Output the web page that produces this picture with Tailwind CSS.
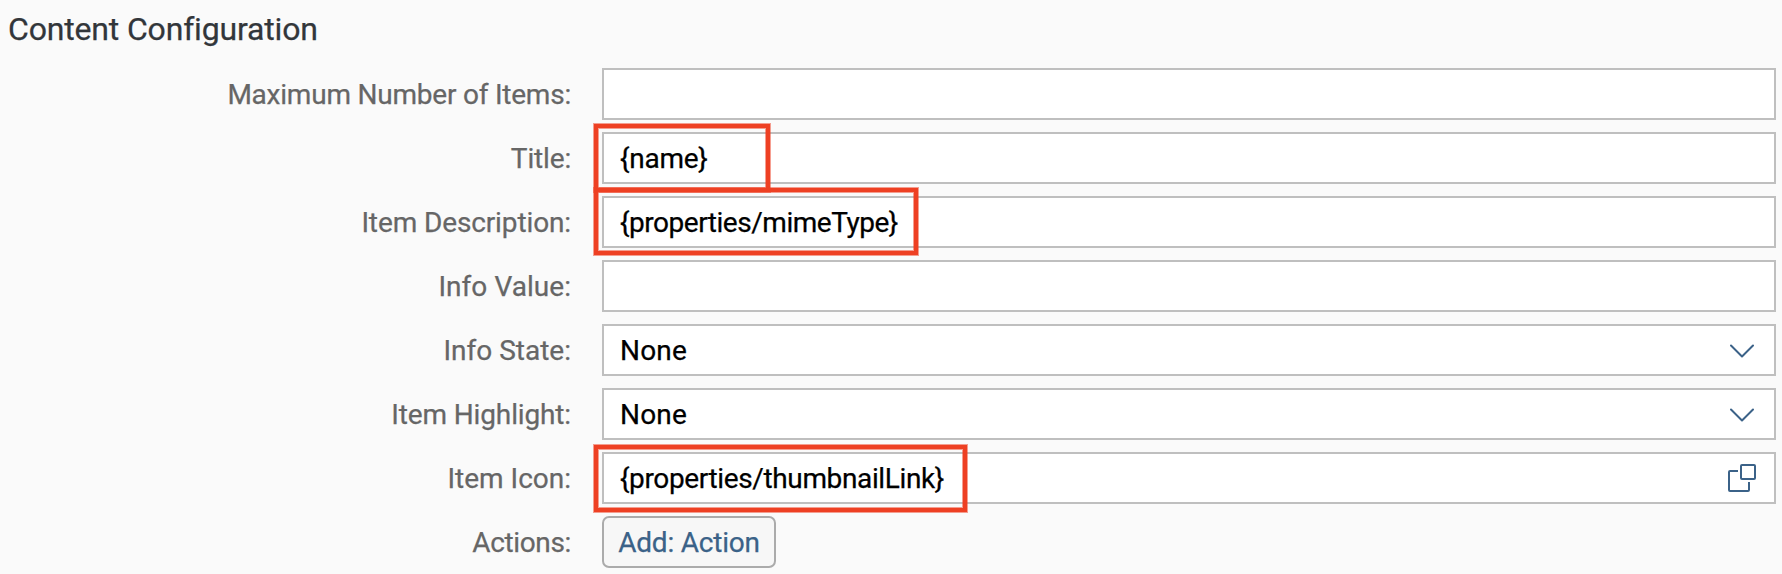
<!DOCTYPE html>
<html lang="en">
<head>
<meta charset="utf-8">
<title>Content Configuration</title>
<script src="https://cdn.jsdelivr.net/npm/@tailwindcss/browser@4"></script>
</head>
<body class="h-[574px] overflow-hidden bg-[#fafafa] font-[Roboto,sans-serif] text-[28px] text-black [-webkit-text-stroke:0.25px]">
<main class="pr-[6px]">
  <h2 class="mb-[10px] flex h-[58px] items-center pl-2 text-[32px] leading-[58px] tracking-[-0.17px] text-[#32363a]">Content Configuration</h2>
  <form class="grid grid-cols-[571px_1fr] gap-x-[31px] gap-y-3 text-right leading-[52px]">
    <label class="h-[52px] pt-px tracking-[-0.22px] text-[#666666]">Maximum Number of Items:</label>
    <div class="h-[52px] border-2 border-[#bfbfbf] bg-white"></div>

    <label class="h-[52px] pt-px tracking-[-0.16px] text-[#666666]">Title:</label>
    <div class="relative flex h-[52px] items-center border-2 border-[#bfbfbf] bg-white pl-4">
      <span class="pt-[2px] tracking-[-0.25px]">{name}</span>
      <div class="absolute -top-[10px] -left-[10px] h-[68px] w-[176px] border-4 border-[#ee4023] shadow-[0_0_0_1px_#ee402380,inset_0_0_0_1px_#ee402380]"></div>
    </div>

    <label class="h-[52px] pt-px tracking-[-0.12px] text-[#666666]">Item Description:</label>
    <div class="relative flex h-[52px] items-center border-2 border-[#bfbfbf] bg-white pl-4">
      <span class="pt-[2px] tracking-[-0.47px]">{properties/mimeType}</span>
      <div class="absolute -top-[10px] -left-[10px] h-[67px] w-[324px] border-4 border-[#ee4023] shadow-[0_0_0_1px_#ee402380,inset_0_0_0_1px_#ee402380]"></div>
    </div>

    <label class="h-[52px] pt-px tracking-[0.05px] text-[#666666]">Info Value:</label>
    <div class="h-[52px] border-2 border-[#bfbfbf] bg-white"></div>

    <label class="h-[52px] pt-px text-[#666666]">Info State:</label>
    <div class="flex h-[52px] items-center justify-between border-2 border-[#bfbfbf] bg-white pr-5 pl-4">
      <span class="pt-[2px] tracking-[0.2px]">None</span>
      <svg class="mt-[2px] h-[14px] w-[24px]" viewBox="0 0 24 14" fill="none" stroke="#3b6288" stroke-width="2" stroke-linecap="round" stroke-linejoin="round"><path d="M1 1.500 12 12.500 23 1.500"/></svg>
    </div>

    <label class="h-[52px] pt-px tracking-[-0.14px] text-[#666666]">Item Highlight:</label>
    <div class="flex h-[52px] items-center justify-between border-2 border-[#bfbfbf] bg-white pr-5 pl-4">
      <span class="pt-[2px] tracking-[0.2px]">None</span>
      <svg class="mt-[2px] h-[14px] w-[24px]" viewBox="0 0 24 14" fill="none" stroke="#3b6288" stroke-width="2" stroke-linecap="round" stroke-linejoin="round"><path d="M1 1.500 12 12.500 23 1.500"/></svg>
    </div>

    <label class="h-[52px] pt-px text-[#666666]">Item Icon:</label>
    <div class="relative flex h-[52px] items-center justify-between border-2 border-[#bfbfbf] bg-white pr-[18px] pl-4">
      <span class="pt-[2px] tracking-[-0.37px]">{properties/thumbnailLink}</span>
      <svg class="h-[28px] w-[28px]" viewBox="0 0 28 28" fill="none" stroke="#3b6288" stroke-width="2" stroke-linecap="butt" stroke-linejoin="round"><rect x="13" y="1" width="14" height="14" rx="1"/><path d="M10 7H2Q1 7 1 8V26Q1 27 2 27H20Q21 27 21 26V18"/></svg>
      <div class="absolute -top-[9px] -left-[10px] h-[67px] w-[373px] border-4 border-[#ee4023] shadow-[0_0_0_1px_#ee402380,inset_0_0_0_1px_#ee402380]"></div>
    </div>

    <label class="h-[52px] pt-px tracking-[-0.35px] text-[#666666]">Actions:</label>
    <button type="button" class="h-[52px] w-[174px] rounded-[7px] border-2 border-[#ababab] bg-[#f7f7f7] pt-[2px] text-center leading-[46px] tracking-[-0.22px] text-[#3b6288]">Add: Action</button>
  </form>
</main>
</body>
</html>
